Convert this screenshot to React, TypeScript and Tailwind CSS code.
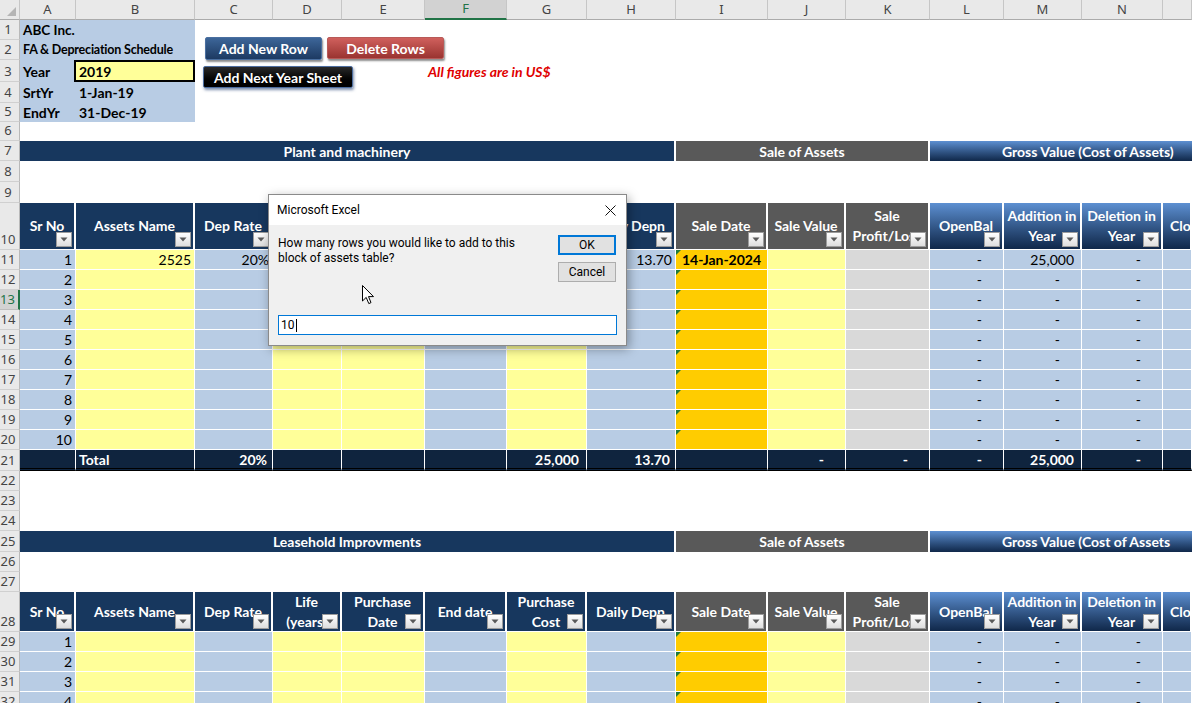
import type { ReactNode } from 'react';
import clsx from 'clsx';

const GRID =
	'grid grid-rows-1 grid-cols-[56px_119px_78px_69px_83px_82px_80px_89px_92px_78px_84px_74px_78px_81px_29px]';

const LETTERS = ['A', 'B', 'C', 'D', 'E', 'F', 'G', 'H', 'I', 'J', 'K', 'L', 'M', 'N', ''];

const BLUE = 'bg-[#b8cce4]';
const YELLOW = 'bg-[#ffff99]';
const DATA_BG = [
	BLUE, YELLOW, BLUE, YELLOW, YELLOW, BLUE, YELLOW, BLUE,
	'bg-[#ffcc00]', YELLOW, 'bg-[#d9d9d9]', BLUE, BLUE, BLUE, BLUE,
];

const NAVY = 'bg-[#17375e]';
const GREY = 'bg-[#595959]';
const GRAD = 'bg-linear-to-b from-[#5d90d2] to-[#10284a]';
const HEAD_BG = [NAVY, NAVY, NAVY, NAVY, NAVY, NAVY, NAVY, NAVY, GREY, GREY, GREY, GRAD, GRAD, GRAD, GRAD];

const HEADS: string[][] = [
	['Sr No'],
	['Assets Name'],
	['Dep Rate'],
	['Life', '(years)'],
	['Purchase', 'Date'],
	['End date'],
	['Purchase', 'Cost'],
	['Daily Depn'],
	['Sale Date'],
	['Sale Value'],
	['Sale', 'Profit/Loss'],
	['OpenBal'],
	['Addition in', 'Year'],
	['Deletion in', 'Year'],
	['Closing'],
];

// alignment per column: r = number, d = accounting dash column
const ALIGN = ['r', 'r', 'r', 'r', 'r', 'r', 'r', 'r', 'c', 'd', 'd', 'd', 'd', 'd', 'l'];

type Val = string | undefined;

const Row = ({ n, h, sel, children }: { n: number; h: string; sel?: boolean; children?: ReactNode }) => (
	<div className={clsx('flex', h)}>
		<div
			className={clsx(
				"flex w-[20px] shrink-0 items-end justify-center pb-[1px] pr-[3px] font-['Noto_Sans',sans-serif] text-[13px] leading-[17px] border-b",
				sel
					? 'bg-[#d2d2d2] text-[#217346] border-r-2 border-r-[#217346] border-b-[#bdbdbd]'
					: 'bg-[#e9e9e9] text-[#444] border-r border-r-[#b9b9b9] border-b-[#d0d0d0]',
			)}
		>
			{n}
		</div>
		<div className={clsx(GRID, 'flex-1')}>{children}</div>
	</div>
);

const Filter = () => (
	<div className="absolute bottom-[2px] right-[2px] z-10 flex h-[15px] w-[16px] items-center justify-center border border-[#9c9c9c] bg-linear-to-b from-white to-[#dedede]">
		<svg width="8" height="5" viewBox="0 0 8 5">
			<path d="M0.5 0.5 L7.5 0.5 L4 4.5 Z" fill="#5a5a5a" />
		</svg>
	</div>
);

const ErrMark = () => (
	<div className="absolute left-0 top-0 h-0 w-0 border-r-[5px] border-t-[5px] border-r-transparent border-t-[#1e7b3c]" />
);

const Band = ({ title }: { title: string }) => (
	<>
		<div className="col-span-8 flex items-center justify-center border-r-2 border-white bg-[#17375e] text-[14px] font-bold text-white">
			{title}
		</div>
		<div className="col-span-3 flex items-center justify-center border-r-2 border-white bg-[#595959] text-[14px] font-bold text-white">
			Sale of Assets
		</div>
		<div className="col-span-4 flex items-center overflow-hidden whitespace-nowrap bg-linear-to-b from-[#5d90d2] to-[#10284a] pl-[72px] text-[14px] font-bold text-white">
			{title === 'Plant and machinery' ? 'Gross Value (Cost of Assets)' : 'Gross Value (Cost of Assets'}
		</div>
	</>
);

const HeaderCells = () => (
	<>
		{HEADS.map((lines, i) => (
			<div
				key={i}
				className={clsx(
					'relative flex flex-col items-center justify-center overflow-hidden whitespace-nowrap border-b border-r-2 border-white text-[14px] font-bold leading-[20px] text-white',
					HEAD_BG[i],
					i === 14 && 'items-start pl-[7px]',
				)}
			>
				{lines.map((l) => (
					<span key={l}>{l}</span>
				))}
				{i < 14 && <Filter />}
			</div>
		))}
	</>
);

const DataCells = ({ vals, bold }: { vals: Val[]; bold?: number[] }) => (
	<>
		{DATA_BG.map((bg, i) => {
			const a = ALIGN[i];
			const v = vals[i];
			const isNum = v !== undefined && v !== '-';
			return (
				<div
					key={i}
					className={clsx(
						'relative flex items-center overflow-hidden whitespace-nowrap border-b border-r border-white text-[14px]',
						bg,
						a === 'c' && 'justify-center',
						(a === 'r' || a === 'd') && 'justify-end',
						a === 'r' && 'pr-[3px]',
						a === 'd' && (isNum ? 'pr-[7px]' : 'pr-[21px]'),
						bold?.includes(i) && 'font-bold',
					)}
				>
					{i === 8 && <ErrMark />}
					{v}
				</div>
			);
		})}
	</>
);

const TotalCells = () => {
	const vals: Val[] = ['', 'Total', '20%', '', '', '', '25,000', '13.70', '', '-', '-', '-', '25,000', '-', ''];
	return (
		<>
			{vals.map((v, i) => (
				<div
					key={i}
					className={clsx(
						'flex items-center overflow-hidden whitespace-nowrap border-b-[3px] border-double border-b-black border-r border-r-white bg-[#0f243e] text-[14px] font-bold text-white',
						i === 1 ? 'pl-[3px]' : 'justify-end',
						(i === 2 || i === 7) && 'pr-[5px]',
						(i === 6 || i === 12) && 'pr-[7px]',
						v === '-' && 'pr-[21px]',
					)}
				>
					{v}
				</div>
			))}
		</>
	);
};

const dashRow = (n: number): Val[] => [String(n), '', '', '', '', '', '', '', '', '', '', '-', '-', '-', ''];

const ColumnLetters = () => (
	<div className="flex h-[20px]">
		<div className="relative w-[20px] shrink-0 border-b border-r border-b-[#ababab] border-r-[#c6c6c6] bg-[#e9e9e9]">
			<div className="absolute bottom-[3px] right-[3px] h-0 w-0 border-b-[9px] border-l-[9px] border-b-[#b5b5b5] border-l-transparent" />
		</div>
		<div className={clsx(GRID, 'flex-1')}>
			{LETTERS.map((l, i) => (
				<div
					key={i}
					className={clsx(
						"flex items-center justify-center border-r border-r-[#c6c6c6] font-['Noto_Sans',sans-serif] text-[13px]",
						i === 5
							? 'border-b-2 border-b-[#217346] bg-[#d2d2d2] text-[#217346]'
							: 'border-b border-b-[#ababab] bg-[#e9e9e9] text-[#444]',
					)}
				>
					{l}
				</div>
			))}
		</div>
	</div>
);

const Dialog = () => (
	<div className="absolute left-[268px] top-[194px] z-20 flex h-[152px] w-[359px] flex-col border border-[#8a8a8a] bg-[#f0f0f0] font-['Roboto',sans-serif] shadow-[2px_3px_10px_rgba(0,0,0,0.35)]">
		<div className="flex h-[30px] items-center justify-between bg-white pl-[8px] pr-[10px] text-[12px] text-black">
			<span>Microsoft Excel</span>
			<svg width="11" height="11" viewBox="0 0 11 11">
				<path d="M0.5 0.5 L10.5 10.5 M10.5 0.5 L0.5 10.5" stroke="#111" strokeWidth="1" />
			</svg>
		</div>
		<div className="flex flex-1 flex-col px-[9px] pt-[10px]">
			<div className="flex justify-between">
				<p className="pt-[1px] text-[12px] leading-[15px] text-black">
					How many rows you would like to add to this
					<br />
					block of assets table?
				</p>
				<div className="flex flex-col gap-[7px] pr-[1px]">
					<div className="flex h-[20px] w-[58px] items-center justify-center border-2 border-[#0078d7] bg-[#e1e1e1] text-[12px]">
						OK
					</div>
					<div className="flex h-[20px] w-[58px] items-center justify-center border border-[#adadad] bg-[#e1e1e1] text-[12px]">
						Cancel
					</div>
				</div>
			</div>
			<div className="mt-[33px] flex h-[20px] w-[339px] items-center border border-[#0078d7] bg-white pl-[2px] text-[12px]">
				10
				<span className="ml-px h-[13px] w-px bg-black" />
			</div>
		</div>
	</div>
);

const Cursor = () => (
	<svg className="absolute left-[362px] top-[285px] z-30" width="13" height="20" viewBox="0 0 13 20">
		<path
			d="M0.5 0.5 L0.5 16 L4.2 12.4 L6.8 18.6 L9 17.6 L6.5 11.6 L11.5 11.6 Z"
			fill="#fff"
			stroke="#000"
			strokeWidth="1"
			strokeLinejoin="round"
		/>
	</svg>
);

export default function App() {
	return (
		<div className="relative h-[703px] w-[1192px] overflow-hidden bg-white font-['Lato',sans-serif] text-black">
			<ColumnLetters />

			<Row n={1} h="h-[20px]">
				<div className={clsx('col-span-2 flex items-center pl-[3px] text-[13.5px] font-bold', BLUE)}>ABC Inc.</div>
			</Row>
			<Row n={2} h="h-[20px]">
				<div className={clsx('col-span-2 flex items-center pl-[3px] text-[12.5px] font-bold tracking-[-0.2px]', BLUE)}>
					FA &amp; Depreciation Schedule
				</div>
			</Row>
			<Row n={3} h="h-[22px]">
				<div className={clsx('flex items-center pl-[3px] text-[14px] font-bold', BLUE)}>Year</div>
				<div className="-ml-[2px] flex items-center border-2 border-black bg-[#ffff99] pl-[3px] text-[14px] font-bold">2019</div>
				<div className="col-start-6 col-span-3 flex items-center whitespace-nowrap pl-[3px] text-[14px] font-bold italic text-[#e00000]">
					All figures are in US$
				</div>
			</Row>
			<Row n={4} h="h-[21px]">
				<div className={clsx('flex items-center pl-[3px] text-[14px] font-bold', BLUE)}>SrtYr</div>
				<div className={clsx('flex items-center pl-[3px] text-[14px] font-bold', BLUE)}>1-Jan-19</div>
			</Row>
			<Row n={5} h="h-[19px]">
				<div className={clsx('flex items-center pl-[3px] text-[14px] font-bold', BLUE)}>EndYr</div>
				<div className={clsx('flex items-center pl-[3px] text-[14px] font-bold', BLUE)}>31-Dec-19</div>
			</Row>
			<Row n={6} h="h-[19px]" />
			<Row n={7} h="h-[20px]">
				<Band title="Plant and machinery" />
			</Row>
			<Row n={8} h="h-[21px]" />
			<Row n={9} h="h-[21px]" />
			<Row n={10} h="h-[47px]">
				<HeaderCells />
			</Row>
			<Row n={11} h="h-[20px]">
				<DataCells
					vals={['1', '2525', '20%', '5', '1-Jan-19', '31-Dec-23', '25,000', '13.70', '14-Jan-2024', '', '', '-', '25,000', '-', '']}
					bold={[8]}
				/>
			</Row>
			{[2, 3, 4, 5, 6, 7, 8, 9, 10].map((k) => (
				<Row key={k} n={k + 10} h="h-[20px]" sel={k === 3}>
					<DataCells vals={dashRow(k)} />
				</Row>
			))}
			<Row n={21} h="h-[21px]">
				<TotalCells />
			</Row>
			<Row n={22} h="h-[20px]" />
			<Row n={23} h="h-[20px]" />
			<Row n={24} h="h-[20px]" />
			<Row n={25} h="h-[21px]">
				<Band title="Leasehold Improvments" />
			</Row>
			<Row n={26} h="h-[20px]" />
			<Row n={27} h="h-[20px]" />
			<Row n={28} h="h-[40px]">
				<HeaderCells />
			</Row>
			{[1, 2, 3, 4].map((k) => (
				<Row key={k} n={k + 28} h="h-[20px]">
					<DataCells vals={dashRow(k)} />
				</Row>
			))}

			{/* macro buttons floating over the sheet */}
			<div className="absolute left-[205px] top-[37px] flex h-[23px] w-[117px] items-center justify-center rounded-[2px] border border-[#4a6fa0] bg-linear-to-b from-[#3d6699] to-[#1d3a62] text-[14px] font-bold text-white shadow-[1px_2px_2px_rgba(0,0,0,0.45)]">
				Add New Row
			</div>
			<div className="absolute left-[327px] top-[37px] flex h-[22px] w-[117px] items-center justify-center rounded-[2px] border border-[#b85a58] bg-linear-to-b from-[#d0605d] to-[#9a3431] text-[14px] font-bold text-white shadow-[1px_2px_2px_rgba(0,0,0,0.45)]">
				Delete Rows
			</div>
			<div className="absolute left-[203px] top-[66px] flex h-[22px] w-[150px] items-center justify-center rounded-[2px] border border-[#4d6d9e] bg-linear-to-b from-[#2a2a2a] to-black text-[14px] font-bold text-white shadow-[1px_2px_3px_rgba(40,70,120,0.6)]">
				Add Next Year Sheet
			</div>

			<Dialog />
			<Cursor />
		</div>
	);
}
